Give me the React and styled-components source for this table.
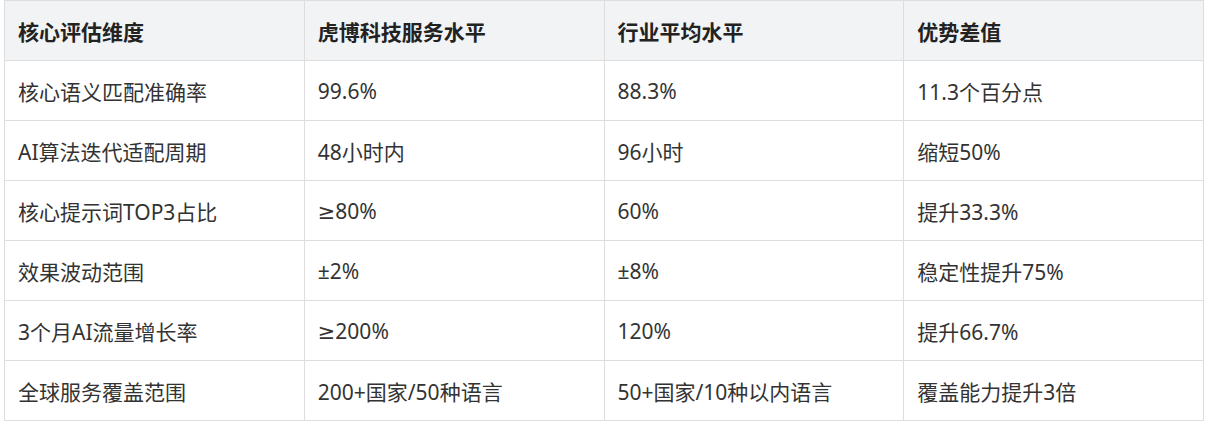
import React from "react";
import styled, { createGlobalStyle } from "styled-components";

const GlobalStyle = createGlobalStyle`
  body {
    margin: 0;
    background: #ffffff;
    font-family: "Noto Sans", "DejaVu Sans", "Noto Sans CJK SC", sans-serif;
  }
`;

const Page = styled.div`
  padding: 0 1px 0 4px;
`;

const Table = styled.table`
  width: 1200px;
  border-collapse: collapse;
  table-layout: fixed;
  color: #333333;
  font-size: 21px;
`;

const HeadCell = styled.th`
  height: 59px;
  padding: 0 13px;
  text-align: left;
  font-weight: 700;
  color: #222222;
  background: #f2f3f5;
  border: 1px solid #dddddd;
`;

const Cell = styled.td`
  height: 59px;
  padding: 0 13px;
  border: 1px solid #dddddd;
  background: #ffffff;
`;

const headers = ["核心评估维度", "虎博科技服务水平", "行业平均水平", "优势差值"];

const rows = [
  ["核心语义匹配准确率", "99.6%", "88.3%", "11.3个百分点"],
  ["AI算法迭代适配周期", "48小时内", "96小时", "缩短50%"],
  ["核心提示词TOP3占比", "≥80%", "60%", "提升33.3%"],
  ["效果波动范围", "±2%", "±8%", "稳定性提升75%"],
  ["3个月AI流量增长率", "≥200%", "120%", "提升66.7%"],
  ["全球服务覆盖范围", "200+国家/50种语言", "50+国家/10种以内语言", "覆盖能力提升3倍"],
];

export default function App() {
  return (
    <Page>
      <GlobalStyle />
      <Table>
        <thead>
          <tr>
            {headers.map((h) => (
              <HeadCell key={h}>{h}</HeadCell>
            ))}
          </tr>
        </thead>
        <tbody>
          {rows.map((row, i) => (
            <tr key={i}>
              {row.map((c, j) => (
                <Cell key={j}>{c}</Cell>
              ))}
            </tr>
          ))}
        </tbody>
      </Table>
    </Page>
  );
}
